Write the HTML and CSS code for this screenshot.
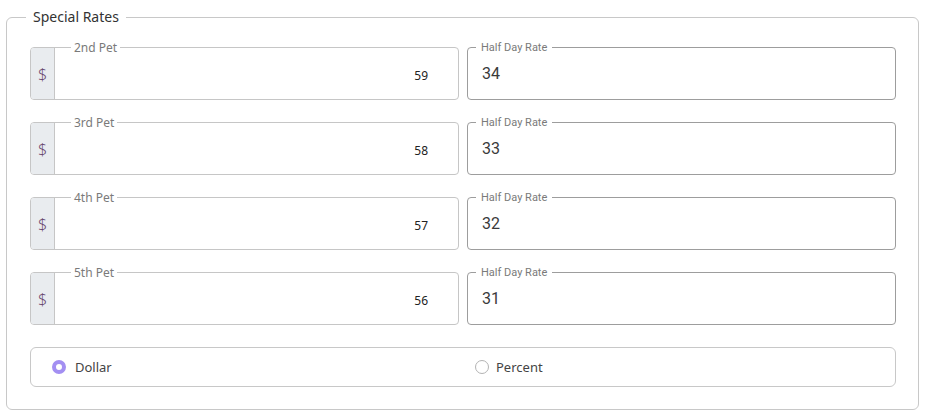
FILE: index.html
```html
<!DOCTYPE html>
<html>
<head>
<meta charset="utf-8">
<link rel="stylesheet" href="styles.css">
</head>
<body>
<div class="panel">
  <div class="panel-legend">Special Rates</div>
  <div class="grid">
    <div class="field pet">
      <span class="label">2nd Pet</span>
      <span class="prefix">$</span>
      <span class="pet-value">59</span>
    </div>
    <div class="field rate">
      <span class="label">Half Day Rate</span>
      <span class="rate-value">34</span>
    </div>
    <div class="field pet">
      <span class="label">3rd Pet</span>
      <span class="prefix">$</span>
      <span class="pet-value">58</span>
    </div>
    <div class="field rate">
      <span class="label">Half Day Rate</span>
      <span class="rate-value">33</span>
    </div>
    <div class="field pet">
      <span class="label">4th Pet</span>
      <span class="prefix">$</span>
      <span class="pet-value">57</span>
    </div>
    <div class="field rate">
      <span class="label">Half Day Rate</span>
      <span class="rate-value">32</span>
    </div>
    <div class="field pet">
      <span class="label">5th Pet</span>
      <span class="prefix">$</span>
      <span class="pet-value">56</span>
    </div>
    <div class="field rate">
      <span class="label">Half Day Rate</span>
      <span class="rate-value">31</span>
    </div>
  </div>
  <div class="radios">
    <label class="radio"><span class="dot checked"></span><span class="radio-text">Dollar</span></label>
    <label class="radio"><span class="dot"></span><span class="radio-text">Percent</span></label>
  </div>
</div>
</body>
</html>
```
FILE: styles.css
```css
* { box-sizing: border-box; }
html, body { margin: 0; padding: 0; background: #fff; }
body { font-family: "Noto Sans", "Open Sans", sans-serif; }

.panel {
  position: relative;
  margin: 17px 0 0 6px;
  width: 913px;
  border: 1px solid #c8c8c8;
  border-radius: 6px;
  padding: 29px 22px 22px 23px;
}
.panel-legend {
  position: absolute;
  top: -11px;
  left: 19px;
  padding: 0 7px;
  background: #fff;
  font-size: 14px;
  line-height: 20px;
  color: #333;
}

.grid {
  display: grid;
  grid-template-columns: 429px 429px;
  column-gap: 8px;
  row-gap: 22px;
}

.field {
  position: relative;
  height: 53px;
  border-radius: 4px;
  display: flex;
  align-items: center;
}
.label {
  position: absolute;
  top: -8px;
  background: #fff;
  line-height: 15px;
  color: #7a7a7a;
  white-space: nowrap;
}

.pet { border: 1px solid #c6c6c6; }
.pet .label { left: 40px; padding: 0 3px; font-size: 12px; }
.prefix {
  width: 24px;
  height: 100%;
  background: #e9ecef;
  border-right: 1px solid #c6c6c6;
  border-radius: 3px 0 0 3px;
  display: flex;
  align-items: center;
  justify-content: center;
  font-size: 16px;
  font-weight: 300;
  color: #6a4a70;
}
.pet-value {
  flex: 1;
  text-align: right;
  padding: 4px 30px 0 0;
  font-size: 12px;
  color: #222;
}

.rate { border: 1px solid #9d9d9d; }
.rate .label {
  left: 8px;
  padding: 0 5px;
  font-family: Roboto, sans-serif;
  font-size: 11px;
}
.rate-value {
  padding-left: 14px;
  font-family: Roboto, sans-serif;
  font-size: 16px;
  color: #3a3a3a;
}

.radios {
  margin-top: 22px;
  height: 40px;
  border: 1px solid #c8c8c8;
  border-radius: 6px;
  display: flex;
  align-items: center;
  padding-left: 21px;
}
.radio {
  display: flex;
  align-items: center;
  gap: 9px;
  width: 425px;
}
.radio + .radio { margin-left: 3px; gap: 7px; }
.dot {
  width: 14px;
  height: 14px;
  border-radius: 50%;
  border: 1px solid #b3b3b3;
  background: #fff;
}
.dot.checked { border: 4px solid #a38ff2; }
.radio-text {
  font-size: 13px;
  color: #444;
}
```
